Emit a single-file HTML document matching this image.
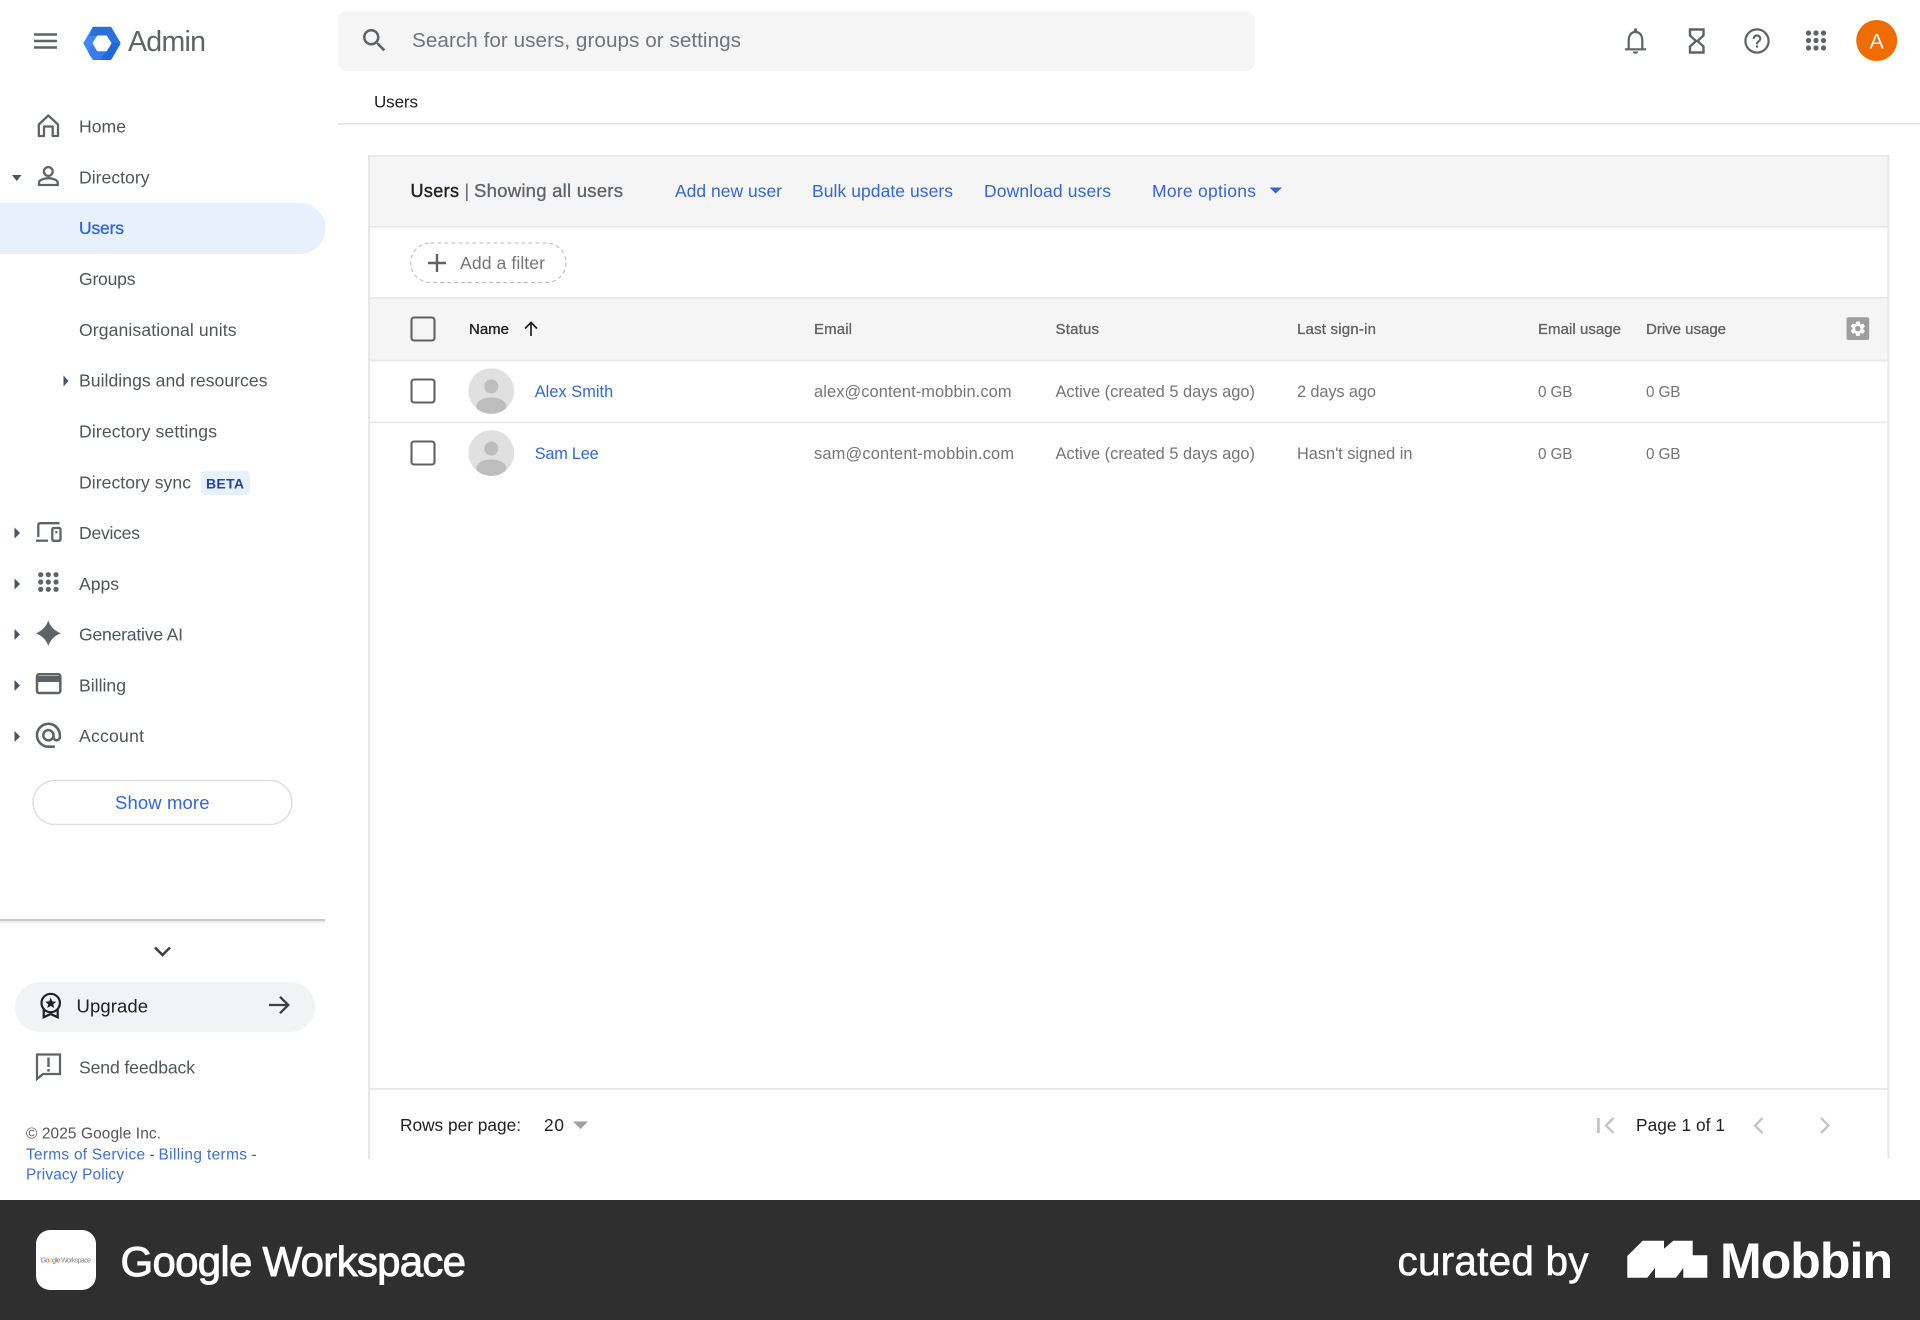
<!DOCTYPE html>
<html lang="en"><head><meta charset="utf-8"><title>Users - Admin Console</title>
<style>
html,body{margin:0;padding:0;background:#fff;width:1920px;height:1320px;overflow:hidden}
svg{display:block}
text{font-family:"Liberation Sans",Arial,sans-serif;white-space:pre}
.nav{font-size:17.6px;fill:#50555a}
.lnk{font-size:17.5px;fill:#3367d6}
.th{font-size:15px;fill:#616161;stroke:#616161;stroke-width:.3}
.td{font-size:16.4px;fill:#757575}
.gb{font-size:15.3px;fill:#757575}
.ft{font-size:15.4px;fill:#555}
.ftb{font-size:15.4px;fill:#3f6fcf}
.car{fill:#46555f}
.ic{fill:#5f6368}
</style></head><body>
<svg xmlns="http://www.w3.org/2000/svg" width="1920" height="1320" viewBox="0 0 1920 1320">
<rect width="1920" height="1320" fill="#fff"/>

<!-- top bar -->
<g stroke="#5f6368" stroke-width="2.4"><path d="M34 34.5H57M34 41H57M34 47.5H57"/></g>
<g stroke-linejoin="round">
<polygon points="85.5,43.3 94,28.8 110,28.8 118.5,43.3 110,58 94,58" fill="#4285f4" stroke="#4285f4" stroke-width="4"/>
<polygon points="92.5,27 111,27 120.5,43.3 111,43.3 106.5,36 90,36" fill="#2a6fdc"/>
<polygon points="120.5,43.3 111,60 100,60 106.5,50.7 111,43.3" fill="#1f68d8"/>
<polygon points="93,43.3 97.5,50.7 106.5,50.7 100,60 93,60 88,52" fill="#3a7bea"/>
<polygon points="93,43.3 97.5,36 106.5,36 111,43.3 106.5,50.7 97.5,50.7" fill="#fff" stroke="#fff" stroke-width="1"/>
</g>
<text x="128" y="51" font-size="28.5" fill="#5f6368" textLength="78">Admin</text>

<rect x="338" y="11" width="917" height="60" rx="9" fill="#f5f5f5"/>
<path transform="translate(359.2 25.2) scale(1.27)" class="ic" d="M15.5 14h-.79l-.28-.27C15.41 12.59 16 11.11 16 9.5 16 5.91 13.09 3 9.5 3S3 5.91 3 9.5 5.91 16 9.5 16c1.61 0 3.09-.59 4.23-1.57l.27.28v.79l5 4.99L20.49 19l-4.99-5zm-6 0C7.01 14 5 11.99 5 9.5S7.01 5 9.5 5 14 7.01 14 9.5 11.99 14 9.5 14z"/>
<text x="412" y="47" font-size="20.7" fill="#70757a" textLength="329">Search for users, groups or settings</text>

<g fill="none" stroke="#5f6368" stroke-width="2.2">
<path d="M1625 49.3H1646M1628.7 49.3V40.5C1628.7 35.3 1631.3 32 1635.5 32C1639.7 32 1642.3 35.3 1642.3 40.5V49.3"/>
<circle cx="1757" cy="41" r="11.6"/>
<path d="M1690 29.5H1703.5V35.5L1697.5 41L1703.5 46.5V52.5H1690V46.5L1696 41L1690 35.5Z" stroke-width="2.4"/>
</g>
<rect x="1634" y="28.3" width="3" height="4" rx="1.4" fill="#5f6368"/>
<path d="M1632.7 51.5H1638.3C1638 53 1637 53.8 1635.5 53.8S1633 53 1632.7 51.5Z" fill="#5f6368"/>
<path transform="translate(1743.8 27.8) scale(1.1)" class="ic" d="M11 18h2v-2h-2v2zM12 6c-2.21 0-4 1.79-4 4h2c0-1.1.9-2 2-2s2 .9 2 2c0 2-3 1.75-3 5h2c0-2.25 3-2.5 3-5 0-2.21-1.79-4-4-4z"/>
<g class="ic">
<circle cx="1808.5" cy="33" r="2.6"/><circle cx="1816" cy="33" r="2.6"/><circle cx="1823.5" cy="33" r="2.6"/>
<circle cx="1808.5" cy="40.5" r="2.6"/><circle cx="1816" cy="40.5" r="2.6"/><circle cx="1823.5" cy="40.5" r="2.6"/>
<circle cx="1808.5" cy="48" r="2.6"/><circle cx="1816" cy="48" r="2.6"/><circle cx="1823.5" cy="48" r="2.6"/>
</g>
<circle cx="1876.7" cy="40.5" r="20.5" fill="#ef6c00"/>
<text x="1876.7" y="48.5" font-size="21.5" fill="#fff" text-anchor="middle">A</text>

<text x="374" y="107.7" font-size="17" fill="#212121" textLength="44">Users</text>
<rect x="338" y="123" width="1582" height="1.6" fill="#e3e3e3"/>

<!-- sidebar -->
<path d="M0 203H300A25.5 25.5 0 0 1 300 254H0Z" fill="#e8f0fe"/>
<text class="nav" x="79" y="132.7" textLength="47">Home</text>
<text class="nav" x="79" y="183.5" textLength="70.5">Directory</text>
<text x="79" y="234" font-size="17.4" fill="#3367d6" stroke="#3367d6" stroke-width=".35" textLength="45">Users</text>
<text class="nav" x="79" y="285" textLength="56.5">Groups</text>
<text class="nav" x="79" y="335.8" textLength="157.5">Organisational units</text>
<text class="nav" x="79" y="386.7" textLength="188.5">Buildings and resources</text>
<text class="nav" x="79" y="437.3" textLength="138">Directory settings</text>
<text class="nav" x="79" y="488.5" textLength="112">Directory sync</text>
<rect x="201" y="471" width="49" height="24" rx="4" fill="#e8f0fe"/>
<text x="206" y="488.5" font-size="14" font-weight="700" fill="#24459c" textLength="38">BETA</text>
<text class="nav" x="79" y="539" textLength="61">Devices</text>
<text class="nav" x="79" y="589.8" textLength="40">Apps</text>
<text class="nav" x="79" y="640.6" textLength="104">Generative AI</text>
<text class="nav" x="79" y="691.3" textLength="47">Billing</text>
<text class="nav" x="79" y="742.2" textLength="65">Account</text>

<polygon class="car" points="12,175 21.5,175 16.7,181"/>
<polygon class="car" points="63.5,375.5 68.5,381 63.5,386.5"/>
<polygon class="car" points="14.5,527.5 20,533 14.5,538.5"/>
<polygon class="car" points="14.5,578.5 20,584 14.5,589.5"/>
<polygon class="car" points="14.5,629 20,634.5 14.5,640"/>
<polygon class="car" points="14.5,680 20,685.5 14.5,691"/>
<polygon class="car" points="14.5,731 20,736.5 14.5,742"/>

<!-- sidebar icons -->
<path d="M48.3 115.5L58 124.5V136H52.7V126.5H44V136H38.8V124.5Z" fill="none" stroke="#5f6368" stroke-width="2.3" stroke-linejoin="round"/>
<g fill="none" stroke="#5f6368" stroke-width="2.3">
<circle cx="48.3" cy="171.5" r="4.4"/>
<path d="M39 185V182.7C39 180 44 178.2 48.3 178.2C52.6 178.2 57.7 180 57.7 182.7V185Z"/>
<path d="M38.3 537V525.2Q38.3 523.2 40.3 523.2H59.5"/><path d="M36 540.7H48"/>
<rect x="52.3" y="528" width="8.2" height="12.8" rx="1.3"/>
</g>
<rect x="55.3" y="531" width="2" height="2.4" fill="#5f6368"/>
<g class="ic">
<circle cx="40.7" cy="574.7" r="2.6"/><circle cx="48.3" cy="574.7" r="2.6"/><circle cx="56" cy="574.7" r="2.6"/>
<circle cx="40.7" cy="582" r="2.6"/><circle cx="48.3" cy="582" r="2.6"/><circle cx="56" cy="582" r="2.6"/>
<circle cx="40.7" cy="589.3" r="2.6"/><circle cx="48.3" cy="589.3" r="2.6"/><circle cx="56" cy="589.3" r="2.6"/>
</g>
<path class="ic" d="M48.3 620.5C50.3 626.5 54.5 631 61 633.3 54.5 635.6 50.3 640 48.3 646 46.3 640 42 635.6 35.8 633.3 42 631 46.3 626.5 48.3 620.5Z"/>
<rect x="37" y="674.3" width="23.3" height="18.7" rx="2" fill="none" stroke="#5f6368" stroke-width="2.5"/>
<rect x="37" y="676" width="23.3" height="6" fill="#5f6368"/>
<path transform="translate(33.2 720) scale(1.27)" class="ic" d="M12 2C6.48 2 2 6.48 2 12s4.48 10 10 10h5v-2h-5c-4.34 0-8-3.66-8-8s3.66-8 8-8 8 3.66 8 8v1.43c0 .79-.71 1.57-1.5 1.57s-1.5-.78-1.5-1.57V12c0-2.76-2.24-5-5-5s-5 2.24-5 5 2.24 5 5 5c1.38 0 2.64-.56 3.54-1.47.65.89 1.77 1.47 2.96 1.47 1.97 0 3.5-1.6 3.5-3.57V12c0-5.52-4.48-10-10-10zm0 13c-1.66 0-3-1.34-3-3s1.34-3 3-3 3 1.34 3 3-1.34 3-3 3z"/>

<rect x="33" y="780.5" width="259" height="44" rx="22" fill="#fff" stroke="#dadce0" stroke-width="1.3"/>
<text x="115" y="809" font-size="18.5" fill="#3367d6" textLength="94.5">Show more</text>

<rect x="0" y="921" width="325" height="2" fill="#eeeeee"/>
<rect x="0" y="919" width="325" height="2" fill="#c9c9c9"/>
<path d="M155 947.5L162.5 955L170 947.5" fill="none" stroke="#3c4043" stroke-width="2.5"/>

<rect x="15" y="982" width="300" height="50" rx="25" fill="#f1f3f4"/>
<g fill="none" stroke="#202124" stroke-width="2.2">
<circle cx="50.7" cy="1003" r="9.2"/>
<path d="M43.7 1009.5V1017.3L50.7 1014L57.7 1017.3V1009.5"/>
</g>
<polygon fill="#202124" points="50.7,997.6 52.3,1001.4 56.2,1001.7 53.2,1004.2 54.2,1008 50.7,1006 47.2,1008 48.2,1004.2 45.2,1001.7 49.1,1001.4"/>
<text x="76.5" y="1012.7" font-size="18.5" fill="#202124" textLength="71.5">Upgrade</text>
<path d="M269 1005H288M280 996.8L288.3 1005L280 1013.2" fill="none" stroke="#3c4043" stroke-width="2.3"/>

<path d="M37 1054.5H60V1074H43L37 1079Z" fill="none" stroke="#5f6368" stroke-width="2.2"/>
<rect x="47.3" y="1057.5" width="2.4" height="9.5" fill="#5f6368"/>
<rect x="47.3" y="1069" width="2.4" height="2.6" fill="#5f6368"/>
<text class="nav" x="79" y="1073.3" textLength="116">Send feedback</text>

<text class="ft" x="26" y="1138.7" textLength="135">© 2025 Google Inc.</text>
<text class="ftb" x="26" y="1159.3" textLength="119">Terms of Service</text>
<text class="ft" x="149.5" y="1159.3">-</text>
<text class="ftb" x="158.5" y="1159.3" textLength="88.5">Billing terms</text>
<text class="ft" x="251.5" y="1159.3">-</text>
<text class="ftb" x="26" y="1179.7" textLength="98">Privacy Policy</text>

<!-- card -->
<rect x="369" y="156" width="1519" height="70" fill="#f5f5f5"/>
<rect x="369" y="298" width="1519" height="61" fill="#f5f5f5"/>
<g fill="#e7e7e7">
<rect x="368" y="155" width="1521" height="1.6"/>
<rect x="368" y="155" width="2" height="1004"/>
<rect x="1887.4" y="155" width="2" height="1004"/>
<rect x="369" y="226" width="1519" height="1.6"/>
<rect x="369" y="297" width="1519" height="1.6"/>
<rect x="369" y="359.4" width="1519" height="2"/>
<rect x="369" y="421.6" width="1519" height="1.6"/>
<rect x="369" y="1088" width="1519" height="1.8"/>
</g>

<text x="410.5" y="197" font-size="18" fill="#202124" stroke="#202124" stroke-width=".4" textLength="48.5">Users</text>
<text x="464.5" y="197" font-size="18" fill="#5f6368">|</text>
<text x="474" y="197" font-size="18.6" fill="#5f6368" stroke="#5f6368" stroke-width=".3" textLength="149">Showing all users</text>
<text class="lnk" x="675" y="197.2" textLength="107">Add new user</text>
<text class="lnk" x="812" y="197.2" textLength="141">Bulk update users</text>
<text class="lnk" x="984" y="197.2" textLength="127">Download users</text>
<text class="lnk" x="1152" y="197.2" textLength="104">More options</text>
<polygon points="1269.5,187.5 1282,187.5 1275.7,193.5" fill="#3367d6"/>

<rect x="410.7" y="243" width="155.3" height="39.5" rx="19.7" fill="#fff" stroke="#bdbdbd" stroke-width="1.1" stroke-dasharray="4 3"/>
<path d="M437 254V272M428 263H446" stroke="#616161" stroke-width="2.4" fill="none"/>
<text x="460" y="269" font-size="17.6" fill="#757575" textLength="85">Add a filter</text>

<g fill="none" stroke="#616161" stroke-width="2.1">
<rect x="411.5" y="317.5" width="23" height="23" rx="2.5"/>
<rect x="411.5" y="379.5" width="23" height="23" rx="2.5"/>
<rect x="411.5" y="441.5" width="23" height="23" rx="2.5"/>
</g>

<text x="469" y="334" font-size="15" fill="#212121" stroke="#212121" stroke-width=".35" textLength="40">Name</text>
<path d="M531 336V323.5M525 328.5L531 322.5L537 328.5" fill="none" stroke="#212121" stroke-width="1.7"/>
<text class="th" x="814" y="334" textLength="38">Email</text>
<text class="th" x="1055.5" y="334" textLength="43.5">Status</text>
<text class="th" x="1297" y="334" textLength="79">Last sign-in</text>
<text class="th" x="1538" y="334" textLength="83">Email usage</text>
<text class="th" x="1646" y="334" textLength="80">Drive usage</text>

<rect x="1846.5" y="317.3" width="22.7" height="22.7" rx="2" fill="#9e9e9e"/>
<path transform="translate(1848.9 319.7) scale(.75)" fill="#fff" d="M19.14 12.94c.04-.3.06-.61.06-.94 0-.32-.02-.64-.07-.94l2.03-1.58c.18-.14.23-.41.12-.61l-1.92-3.32c-.12-.22-.37-.29-.59-.22l-2.39.96c-.5-.38-1.03-.7-1.62-.94l-.36-2.54c-.04-.24-.24-.41-.48-.41h-3.84c-.24 0-.43.17-.47.41l-.36 2.54c-.59.24-1.13.57-1.62.94l-2.39-.96c-.22-.08-.47 0-.59.22L2.74 8.87c-.12.21-.08.47.12.61l2.03 1.58c-.05.3-.09.63-.09.94s.02.64.07.94l-2.03 1.58c-.18.14-.23.41-.12.61l1.92 3.32c.12.22.37.29.59.22l2.39-.96c.5.38 1.03.7 1.62.94l.36 2.54c.05.24.24.41.48.41h3.84c.24 0 .44-.17.47-.41l.36-2.54c.59-.24 1.13-.56 1.62-.94l2.39.96c.22.08.47 0 .59-.22l1.92-3.32c.12-.22.07-.47-.12-.61l-2.01-1.58zM12 15.6c-1.98 0-3.6-1.62-3.6-3.6s1.62-3.6 3.6-3.6 3.6 1.62 3.6 3.6-1.62 3.6-3.6 3.6z"/>

<!-- rows -->
<clipPath id="a1"><circle cx="491.3" cy="391" r="22.8"/></clipPath>
<clipPath id="a2"><circle cx="491.3" cy="453" r="22.8"/></clipPath>
<circle cx="491.3" cy="391" r="22.8" fill="#e0e0e0"/>
<g clip-path="url(#a1)" fill="#bdbdbd"><circle cx="491.3" cy="386.5" r="7"/><ellipse cx="491.3" cy="406" rx="15" ry="8.5"/></g>
<circle cx="491.3" cy="453" r="22.8" fill="#e0e0e0"/>
<g clip-path="url(#a2)" fill="#bdbdbd"><circle cx="491.3" cy="448.5" r="7"/><ellipse cx="491.3" cy="468" rx="15" ry="8.5"/></g>

<text x="534.7" y="396.8" font-size="16.3" fill="#3367d6" textLength="78.5">Alex Smith</text>
<text class="td" x="814" y="396.8" textLength="197.5">alex@content-mobbin.com</text>
<text class="td" x="1055.5" y="396.8" textLength="199.5">Active (created 5 days ago)</text>
<text class="td" x="1297" y="396.8" textLength="79">2 days ago</text>
<text class="gb" x="1538" y="396.8" textLength="34.5">0 GB</text>
<text class="gb" x="1646" y="396.8" textLength="34.5">0 GB</text>

<text x="534.7" y="459" font-size="16.3" fill="#3367d6" textLength="64">Sam Lee</text>
<text class="td" x="814" y="459" textLength="200">sam@content-mobbin.com</text>
<text class="td" x="1055.5" y="459" textLength="199.5">Active (created 5 days ago)</text>
<text class="td" x="1297" y="459" textLength="115.5">Hasn't signed in</text>
<text class="gb" x="1538" y="459" textLength="34.5">0 GB</text>
<text class="gb" x="1646" y="459" textLength="34.5">0 GB</text>

<!-- pagination -->
<text x="400" y="1131" font-size="17.3" fill="#212121" textLength="121">Rows per page:</text>
<text x="544" y="1131" font-size="17.3" fill="#212121" textLength="20">20</text>
<polygon points="573,1121.5 588,1121.5 580.5,1129" fill="#9e9e9e"/>
<rect x="1597" y="1118" width="2.8" height="15" fill="#c4c4c4"/>
<path d="M1613.5 1118L1606 1125.5L1613.5 1133" fill="none" stroke="#c4c4c4" stroke-width="2.3"/>
<text x="1636" y="1131" font-size="17.3" fill="#212121" textLength="89">Page 1 of 1</text>
<path d="M1762.5 1118L1755 1125.5L1762.5 1133" fill="none" stroke="#c4c4c4" stroke-width="2.3"/>
<path d="M1821 1118L1828.5 1125.5L1821 1133" fill="none" stroke="#c4c4c4" stroke-width="2.3"/>

<!-- footer band -->
<rect x="0" y="1200" width="1920" height="120" fill="#2f2f2f"/>
<rect x="36" y="1230" width="60" height="60" rx="14" fill="#fff"/>
<text x="40.7" y="1262.5" font-size="7" fill="#888" textLength="50.3"><tspan fill="#4285f4">G</tspan><tspan fill="#ea4335">o</tspan><tspan fill="#fbbc05">o</tspan><tspan fill="#4285f4">g</tspan><tspan fill="#34a853">l</tspan><tspan fill="#ea4335">e</tspan> Workspace</text>
<text x="120.5" y="1276" font-size="42" fill="#fff" stroke="#fff" stroke-width=".9" textLength="345.5">Google Workspace</text>
<text x="1397.5" y="1275" font-size="40.5" fill="#fff" stroke="#fff" stroke-width=".6" textLength="191">curated by</text>
<polygon fill="#fff" points="1627.3,1256 1642.7,1240.7 1664,1240.7 1664,1248.7 1673.3,1240.7 1692.7,1240.7 1692.7,1255.3 1707.3,1255.3 1707.3,1277.7 1683.3,1277.7 1683.3,1268 1676,1277.7 1655,1277.7 1655,1268 1647.3,1277.7 1627.3,1277.7"/>
<text x="1720" y="1278" font-size="50" font-weight="700" fill="#fff" textLength="173">Mobbin</text>
</svg>
</body></html>
